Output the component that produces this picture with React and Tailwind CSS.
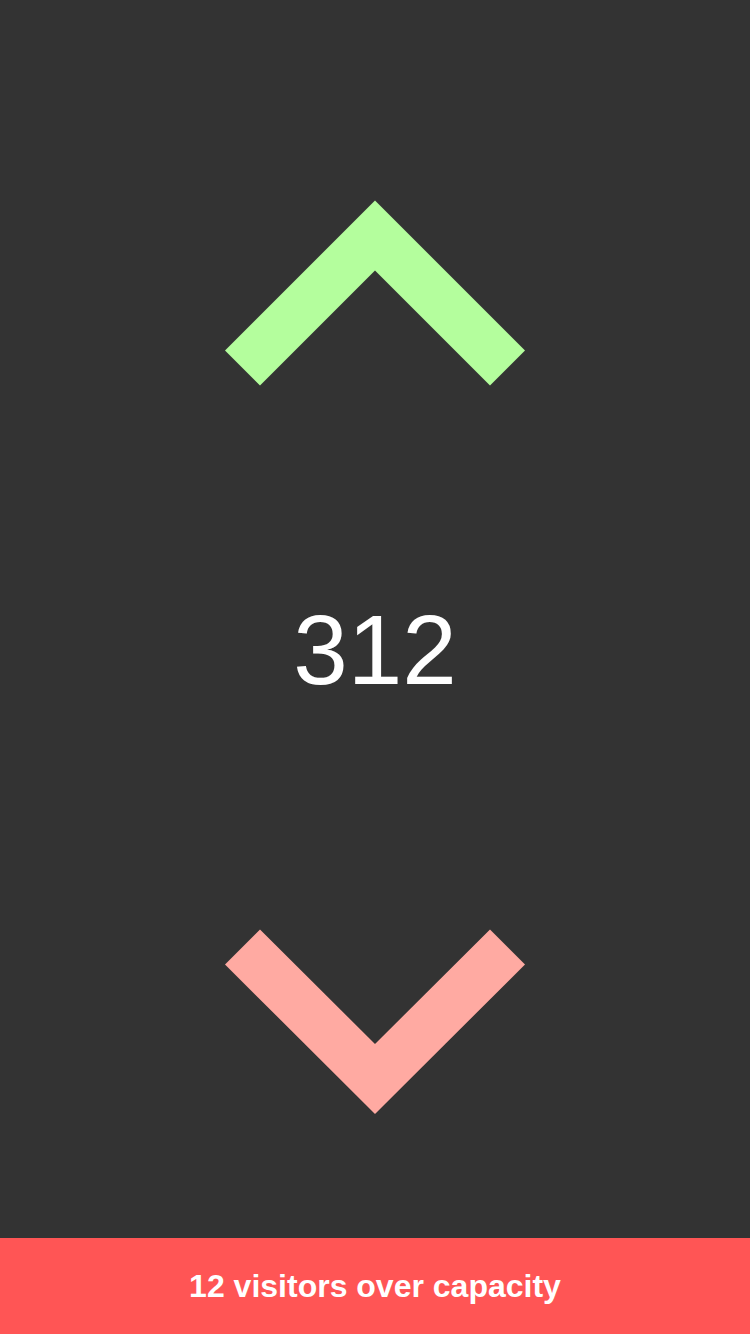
export default function App() {
  return (
    <div className="w-[750px] h-[1334px] bg-[#333333] flex flex-col" style={{ fontFamily: '"Liberation Sans", Arial, sans-serif' }}>
      <div className="flex-1 flex flex-col items-center pt-[200px]">
        <svg width="300" height="186" viewBox="225 200 300 186" className="block">
          <polygon points="375,200.5 525,350.5 490,385.5 375,270.5 260,385.5 225,350.5" fill="#b4fe9d" />
        </svg>
        <div className="h-[528px] w-full flex items-center justify-center">
          <span className="text-white text-[98px] leading-none">312</span>
        </div>
        <svg width="300" height="186" viewBox="225 928 300 186" className="block mt-[14px]">
          <polygon points="260,929.5 375,1044 490,929.5 525,964.5 375,1114 225,964.5" fill="#ffaaa2" />
        </svg>
      </div>
      <div className="h-[96px] bg-[#ff5555] flex items-center justify-center">
        <span className="text-white font-bold text-[32px] leading-none">12 visitors over capacity</span>
      </div>
    </div>
  );
}
